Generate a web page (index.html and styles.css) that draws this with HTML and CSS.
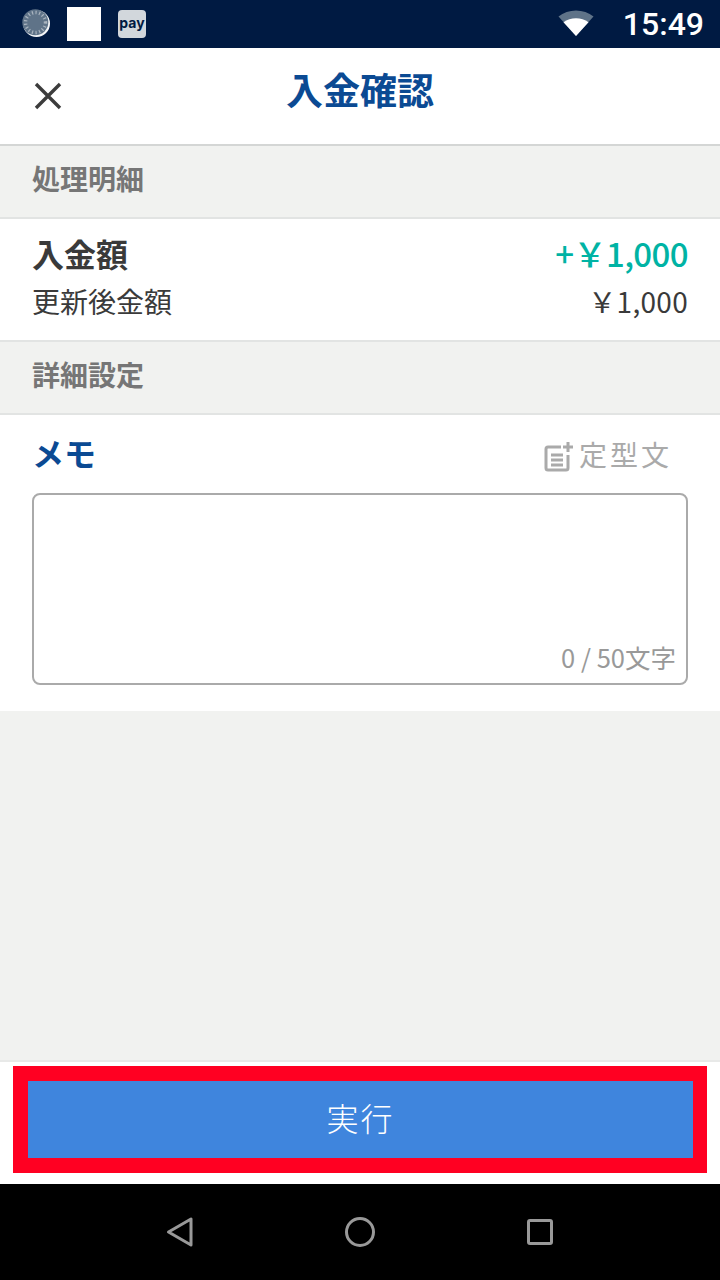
FILE: index.html
```html
<!DOCTYPE html>
<html lang="ja">
<head>
<meta charset="utf-8">
<title>入金確認</title>
<link rel="stylesheet" href="styles.css">
</head>
<body>
<div class="app">
  <div class="statusbar">
    <div class="status-left">
      <svg class="ic-sync" width="30" height="30" viewBox="0 0 30 30">
        <circle cx="14.500" cy="14.500" r="13.500" fill="#f4f6f8"/>
        <circle cx="13.300" cy="13.300" r="13" fill="#5f7388"/>
        <circle cx="13.500" cy="13.500" r="10" fill="none" stroke="#aab4bf" stroke-width="3.500" stroke-dasharray="1.200 2.400"/>
      </svg>
      <div class="ic-white"></div>
      <div class="ic-pay">pay</div>
    </div>
    <div class="status-right">
      <svg class="ic-wifi" width="36" height="26" viewBox="0 0 36 26">
        <path d="M0.500 6.500C10 -1.500 26 -1.500 35.500 6.500L18 26Z" fill="#5f7388"/>
        <path d="M5.500 12.200C12.500 6.800 23.500 6.800 30.500 12.200L18 26Z" fill="#fff"/>
      </svg>
      <span class="clock">15:49</span>
    </div>
  </div>

  <header class="titlebar">
    <svg class="ic-close" width="30" height="30" viewBox="0 0 30 30">
      <path d="M3 3L27 27M27 3L3 27" stroke="#3c3c3c" stroke-width="3.400" fill="none"/>
    </svg>
    <h1 class="title">入金確認</h1>
  </header>

  <div class="section-head">処理明細</div>
  <section class="details">
    <div class="row row-main"><span>入金額</span><span class="plus">+￥1,000</span></div>
    <div class="row row-sub"><span>更新後金額</span><span class="sub-amount">￥1,000</span></div>
  </section>

  <div class="section-head">詳細設定</div>
  <section class="memo">
    <div class="memo-head">
      <span class="memo-label">メモ</span>
      <span class="template">
        <svg class="ic-template" width="30" height="32" viewBox="0 0 30 32">
          <path d="M18 6H5a2 2 0 0 0-2 2v19a2 2 0 0 0 2 2h18a2 2 0 0 0 2-2V14" fill="none" stroke="#aaa" stroke-width="3"/>
          <path d="M8 14h12M8 19h12M8 24h12M25 1v10M20 6h10" fill="none" stroke="#aaa" stroke-width="3"/>
        </svg>
        <span class="template-text">定型文</span>
      </span>
    </div>
    <div class="memo-box"><span class="counter">0 / 50文字</span></div>
  </section>

  <div class="spacer"></div>

  <footer class="action">
    <div class="highlight"><button class="run">実行</button></div>
  </footer>

  <nav class="navbar">
    <svg width="28" height="32" viewBox="0 0 28 32"><path d="M2.500 16L25 3V29Z" fill="none" stroke="#999" stroke-width="3" stroke-linejoin="round"/></svg>
    <svg width="32" height="32" viewBox="0 0 32 32"><circle cx="16" cy="16" r="13.500" fill="none" stroke="#999" stroke-width="3"/></svg>
    <svg width="28" height="28" viewBox="0 0 28 28"><rect x="2.500" y="2.500" width="23" height="23" rx="1.500" fill="none" stroke="#999" stroke-width="3"/></svg>
  </nav>
</div>
</body>
</html>
```
FILE: styles.css
```css
* { box-sizing: border-box; }
html, body { margin: 0; padding: 0; }
body { font-family: "Noto Sans CJK JP", "Noto Sans", sans-serif; background: #f1f2f0; }
.app { width: 720px; height: 1280px; display: flex; flex-direction: column; overflow: hidden; }

.statusbar { height: 48px; flex: none; background: #001a42; display: flex; justify-content: space-between; align-items: center; padding: 0 16px 0 22px; }
.status-left { display: flex; align-items: center; }
.ic-sync { margin-right: 15px; }
.ic-white { width: 34px; height: 34px; background: #fff; margin-right: 17px; }
.ic-pay { width: 28px; height: 28px; border-radius: 4px; background: #d2d7dc; color: #001a42; font: bold 14px/26px "Inter", sans-serif; text-align: center; }
.status-right { display: flex; align-items: center; }
.ic-wifi { margin-right: 29px; margin-top: -2px; }
.clock { font: 500 32px/50px Roboto, sans-serif; color: #fff; }

.titlebar { height: 98px; flex: none; background: #fff; border-bottom: 2px solid #d4d6d5; display: flex; align-items: center; justify-content: center; position: relative; }
.ic-close { position: absolute; left: 33px; top: 33px; }
.title { margin: 0 0 14px; font-size: 37px; font-weight: 700; color: #0b4a93; line-height: 1; }

.section-head { height: 73px; flex: none; background: #f1f2f0; border-bottom: 2px solid #e2e4e3; padding: 0 32px 7px; display: flex; align-items: center; font-size: 28px; font-weight: 700; color: #767676; }

.details { height: 123px; flex: none; background: #fff; padding: 9px 32px 0; border-bottom: 2px solid #e2e4e3; }
.row { display: flex; justify-content: space-between; align-items: center; }
.row-main { height: 49px; font-size: 32px; font-weight: 700; color: #3a3a3a; }
.plus { color: #00b3a4; font-size: 33px; font-weight: 500; letter-spacing: -0.6px; }
.row-sub { height: 48px; font-size: 28px; color: #3a3a3a; }
.sub-amount { letter-spacing: 0.3px; }

.memo { height: 296px; flex: none; background: #fff; padding: 12px 32px 0; }
.memo-head { height: 50px; display: flex; justify-content: space-between; align-items: center; }
.memo-label { font-size: 32px; font-weight: 700; color: #0b4a93; }
.template { display: flex; align-items: center; gap: 6px; margin-right: 16px; }
.ic-template { margin: 5px 0 -5px; margin-left: -1px; }
.template-text { font-size: 28px; letter-spacing: 3px; color: #aaa; margin-top: 4px; }
.memo-box { margin-top: 16px; height: 192px; border: 2px solid #aaa; border-radius: 8px; position: relative; }
.counter { position: absolute; right: 10px; bottom: 8px; font-size: 25.500px; color: #999; line-height: 36px; }

.spacer { flex: 1; background: #f1f2f0; }

.action { height: 124px; flex: none; background: #fff; border-top: 2px solid #e8e9e8; padding: 4px 13px 0 13px; }
.highlight { height: 107px; background: #ff0022; padding: 15px 14px 15px 15px; }
.run { display: block; width: 100%; height: 77px; border: 0; padding: 0 0 6px; background: #3f85dd; color: #fff; font: 300 32px/1 "Noto Sans CJK JP", sans-serif; letter-spacing: 2px; }

.navbar { height: 96px; flex: none; background: #000; display: flex; align-items: center; padding: 0 166px; justify-content: space-between; }
```
